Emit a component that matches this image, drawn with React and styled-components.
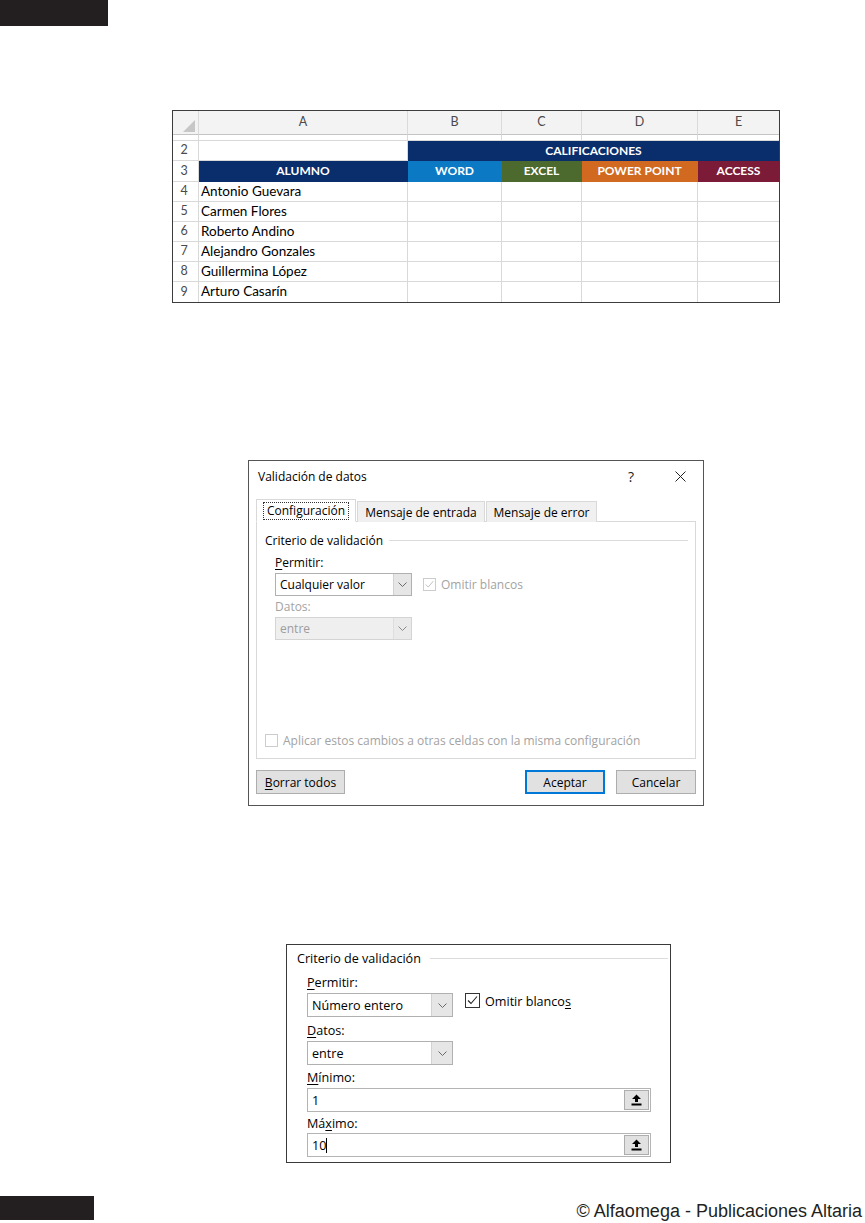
import React from "react";
import styled, { createGlobalStyle } from "styled-components";

const GlobalStyle = createGlobalStyle`
  *, *::before, *::after { box-sizing: border-box; }
  html, body { margin: 0; padding: 0; background: #ffffff; }
  body { font-family: "Open Sans", "Noto Sans", sans-serif; color: #000; }
`;

const Page = styled.div`
  width: 865px;
  height: 1223px;
  display: flex;
  flex-direction: column;
  overflow: hidden;
`;

const PageTab = styled.div`
  flex: none;
  width: ${(p) => p.$w}px;
  height: ${(p) => p.$h}px;
  background: #231f20;
`;

/* ---------------- Spreadsheet ---------------- */

const Sheet = styled.div`
  flex: none;
  margin: 84px 0 0 172px;
  width: 608px;
  border: 1px solid #3c3c3c;
  display: grid;
  grid-template-columns: 26px 209px 94px 80px 116px 81px;
  grid-template-rows: 24px 6px 20px 21px repeat(6, 20px);
  font-family: Lato, "Open Sans", sans-serif;
`;

const Cell = styled.div`
  display: flex;
  align-items: center;
  justify-content: ${(p) => (p.$center ? "center" : "flex-start")};
  padding: 0 2px;
  grid-column: ${(p) => (p.$span ? `span ${p.$span}` : "auto")};
  background: ${(p) => p.$bg || "#ffffff"};
  color: ${(p) => p.$fg || "#000000"};
  border-right: ${(p) => (p.$lastCol ? "none" : `1px solid ${p.$line || "#d9d9d9"}`)};
  border-bottom: ${(p) => (p.$lastRow ? "none" : `1px solid ${p.$line || "#d9d9d9"}`)};
  font-size: ${(p) => p.$fs || 13.5}px;
  font-weight: ${(p) => (p.$bold ? 700 : 400)};
  white-space: nowrap;
  overflow: hidden;
  line-height: 1;
`;

const ColHead = styled(Cell)`
  background: #f3f3f3;
  color: #4a4a4a;
  font-size: 12.5px;
  border-bottom: 1px solid #c4c4c4;
  border-right: ${(p) => (p.$lastCol ? "none" : "1px solid #dadada")};
  justify-content: center;
`;

const RowHead = styled(Cell)`
  color: #4a4a4a;
  font-size: 12.5px;
  justify-content: center;
  padding: 0 3px 0 0;
`;

const CornerCell = styled(ColHead)`
  align-items: flex-end;
  justify-content: flex-end;
  padding: 0 3px 2px 0;
`;

/* ---------------- Dialog ---------------- */

const Dialog = styled.section`
  flex: none;
  margin: 157px 0 0 248px;
  width: 456px;
  height: 346px;
  border: 1px solid #555555;
  background: #ffffff;
  display: flex;
  flex-direction: column;
  font-size: 12px;
`;

const TitleBar = styled.header`
  height: 31px;
  display: flex;
  align-items: center;
  padding-left: 9px;
`;

const Title = styled.div`
  flex: 1;
  font-size: 12px;
  color: #000;
`;

const TitleButton = styled.div`
  width: ${(p) => p.$w}px;
  height: 31px;
  margin-left: ${(p) => p.$ml || 0}px;
  display: flex;
  align-items: center;
  justify-content: center;
  color: #222;
  font-size: 14px;
`;

const TabStrip = styled.div`
  margin: 7px 0 -1px 0;
  height: 23px;
  padding-left: 7px;
  display: flex;
  align-items: flex-end;
`;

const Tab = styled.div`
  position: relative;
  z-index: ${(p) => (p.$active ? 1 : 0)};
  width: ${(p) => p.$w}px;
  height: ${(p) => (p.$active ? 23 : 21)}px;
  margin-left: ${(p) => (p.$active ? 0 : 1)}px;
  background: ${(p) => (p.$active ? "#ffffff" : "#f0f0f0")};
  border: 1px solid #d9d9d9;
  border-bottom: ${(p) => (p.$active ? "1px solid #ffffff" : "none")};
  display: flex;
  align-items: center;
  justify-content: center;
  font-size: 12px;
  color: #000;
  white-space: nowrap;
`;

const FocusRing = styled.span`
  border: 1px dotted #333;
  padding: 0 3px;
  line-height: 16px;
`;

const TabPanel = styled.div`
  margin: 0 7px;
  height: 238px;
  border: 1px solid #d9d9d9;
  background: #fff;
  padding: 10px 7px 9px 8px;
  display: flex;
  flex-direction: column;
`;

const Legend = styled.div`
  display: flex;
  align-items: center;
  height: ${(p) => p.$h}px;
  font-size: ${(p) => p.$fs}px;
  color: #000;
  white-space: nowrap;
`;

const LegendRule = styled.div`
  flex: 1;
  height: 1px;
  background: #dcdcdc;
  margin-left: ${(p) => p.$gap}px;
`;

const GroupBody = styled.div`
  padding-left: 10px;
  display: flex;
  flex-direction: column;
`;

const FieldLabel = styled.div`
  margin-top: ${(p) => p.$mt}px;
  height: ${(p) => p.$h}px;
  line-height: ${(p) => p.$h}px;
  font-size: ${(p) => p.$fs}px;
  color: ${(p) => (p.$muted ? "#a3a3a3" : "#000")};
  white-space: nowrap;
`;

const Key = styled.span`
  text-decoration: underline;
  text-underline-offset: 2px;
`;

const FieldRow = styled.div`
  margin-top: ${(p) => p.$mt}px;
  display: flex;
  align-items: ${(p) => p.$align || "center"};
`;

const Combo = styled.div`
  width: ${(p) => p.$w}px;
  height: ${(p) => p.$h}px;
  border: 1px solid ${(p) => (p.$disabled ? "#d4d4d4" : "#b0b0b0")};
  background: ${(p) => (p.$disabled ? "#efefef" : "#ffffff")};
  display: flex;
  align-items: stretch;
  font-size: ${(p) => p.$fs}px;
  color: ${(p) => (p.$disabled ? "#9d9d9d" : "#000")};
`;

const ComboText = styled.div`
  flex: 1;
  display: flex;
  align-items: center;
  padding-left: 4px;
  white-space: nowrap;
`;

const ComboArrow = styled.div`
  width: ${(p) => p.$w}px;
  background: ${(p) => (p.$disabled ? "#eaeaea" : "#e6e6e6")};
  border-left: 1px solid ${(p) => (p.$disabled ? "#dedede" : "#d2d2d2")};
  display: flex;
  align-items: center;
  justify-content: center;
`;

const Box = styled.div`
  flex: none;
  width: ${(p) => p.$size}px;
  height: ${(p) => p.$size}px;
  margin-left: ${(p) => p.$ml || 0}px;
  border: 1px solid ${(p) => (p.$disabled ? "#cccccc" : "#333333")};
  background: #fff;
  display: flex;
  align-items: center;
  justify-content: center;
`;

const BoxLabel = styled.span`
  margin-left: 5px;
  font-size: ${(p) => p.$fs}px;
  color: ${(p) => (p.$muted ? "#a3a3a3" : "#000")};
  white-space: nowrap;
`;

const Spacer = styled.div`
  flex: 1;
`;

const ButtonRow = styled.div`
  margin-top: 11px;
  padding: 0 7px;
  height: 24px;
  display: flex;
  gap: 11px;
`;

const Button = styled.div`
  width: ${(p) => p.$w}px;
  height: 24px;
  margin-right: ${(p) => (p.$pushRight ? "auto" : "0")};
  background: #e1e1e1;
  border: 1px solid ${(p) => (p.$default ? "#0078d7" : "#adadad")};
  box-shadow: ${(p) => (p.$default ? "inset 0 0 0 1px #0078d7" : "none")};
  display: flex;
  align-items: center;
  justify-content: center;
  font-size: 12px;
  color: #000;
`;

/* ---------------- Zoomed criteria panel ---------------- */

const Criteria = styled.section`
  flex: none;
  margin: 138px 0 0 286px;
  width: 385px;
  height: 219px;
  border: 1px solid #3a3a3a;
  background: #fff;
  padding: 5px 2px 0 10px;
`;

const RefInput = styled.div`
  margin-top: ${(p) => p.$mt}px;
  width: 344px;
  height: 24px;
  border: 1px solid #b4b4b4;
  display: flex;
  align-items: stretch;
  font-size: 12.6px;
`;

const RefValue = styled.div`
  flex: 1;
  display: flex;
  align-items: center;
  padding-left: 4px;
`;

const Caret = styled.span`
  display: inline-block;
  width: 1px;
  height: 15px;
  background: #000;
`;

const RefButton = styled.div`
  width: 25px;
  margin: 1px 1px 1px 0;
  background: #e1e1e1;
  border: 1px solid #adadad;
  display: flex;
  align-items: center;
  justify-content: center;
`;

/* ---------------- Footer ---------------- */

const Footer = styled.footer`
  flex: none;
  margin-top: 33px;
  height: 24px;
  display: flex;
  justify-content: space-between;
  align-items: flex-start;
`;

const Credit = styled.div`
  padding: 3px 3px 0 0;
  font-family: "Liberation Sans", Arial, sans-serif;
  font-size: 18px;
  line-height: 24px;
  color: #231f20;
  white-space: nowrap;
`;

/* ---------------- Icons ---------------- */

const Chevron = ({ color = "#6b6b6b" }) => (
  <svg width="9" height="5" viewBox="0 0 9 5">
    <polyline points="0.5,0.5 4.5,4.5 8.5,0.5" fill="none" stroke={color} strokeWidth="1" />
  </svg>
);

const Check = ({ size, color }) => (
  <svg width={size} height={size} viewBox="0 0 13 13">
    <polyline points="2,6.5 5,9.5 11,2.5" fill="none" stroke={color} strokeWidth="1.1" />
  </svg>
);

const CloseIcon = () => (
  <svg width="11" height="11" viewBox="0 0 11 11">
    <path d="M0.5 0.5 L10.5 10.5 M10.5 0.5 L0.5 10.5" stroke="#222" strokeWidth="1" />
  </svg>
);

const UploadArrow = () => (
  <svg width="11" height="12" viewBox="0 0 11 12">
    <path d="M5.5 0.5 L10 5 H7 V8 H4 V5 H1 Z" fill="#000" />
    <rect x="0.5" y="9.5" width="10" height="2" fill="#000" />
  </svg>
);

const CornerMark = () => (
  <svg width="12" height="12" viewBox="0 0 12 12">
    <polygon points="12,0 12,12 0,12" fill="#c7c7c7" />
  </svg>
);

/* ---------------- Data ---------------- */

const COLUMNS = ["A", "B", "C", "D", "E"];
const NAMES = [
  "Antonio Guevara",
  "Carmen Flores",
  "Roberto Andino",
  "Alejandro Gonzales",
  "Guillermina López",
  "Arturo Casarín",
];
const SUBJECTS = [
  { label: "WORD", bg: "#0b79c4" },
  { label: "EXCEL", bg: "#4c6a2d" },
  { label: "POWER POINT", bg: "#d16a20" },
  { label: "ACCESS", bg: "#7b1b37" },
];
const NAVY = "#0a2d6c";

function Spreadsheet() {
  return (
    <Sheet>
      <CornerCell>
        <CornerMark />
      </CornerCell>
      {COLUMNS.map((c, i) => (
        <ColHead key={c} $lastCol={i === COLUMNS.length - 1}>
          {c}
        </ColHead>
      ))}

      <RowHead />
      {COLUMNS.map((c, i) => (
        <Cell key={`r1${c}`} $lastCol={i === COLUMNS.length - 1} />
      ))}

      <RowHead>2</RowHead>
      <Cell />
      <Cell $span={4} $lastCol $center $bold $bg={NAVY} $fg="#fff" $fs={12} $line={NAVY}>
        CALIFICACIONES
      </Cell>

      <RowHead>3</RowHead>
      <Cell $center $bold $bg={NAVY} $fg="#fff" $fs={12} $line={NAVY}>
        ALUMNO
      </Cell>
      {SUBJECTS.map((s, i) => (
        <Cell
          key={s.label}
          $center
          $bold
          $bg={s.bg}
          $fg="#fff"
          $fs={12}
          $line={s.bg}
          $lastCol={i === SUBJECTS.length - 1}
        >
          {s.label}
        </Cell>
      ))}

      {NAMES.map((name, r) => {
        const last = r === NAMES.length - 1;
        return (
          <React.Fragment key={name}>
            <RowHead $lastRow={last}>{r + 4}</RowHead>
            <Cell $lastRow={last}>{name}</Cell>
            {SUBJECTS.map((s, i) => (
              <Cell key={s.label} $lastRow={last} $lastCol={i === SUBJECTS.length - 1} />
            ))}
          </React.Fragment>
        );
      })}
    </Sheet>
  );
}

function ValidationDialog() {
  return (
    <Dialog>
      <TitleBar>
        <Title>Validación de datos</Title>
        <TitleButton $w={28}>?</TitleButton>
        <TitleButton $w={46} $ml={12}>
          <CloseIcon />
        </TitleButton>
      </TitleBar>

      <TabStrip>
        <Tab $active $w={100}>
          <FocusRing>Configuración</FocusRing>
        </Tab>
        <Tab $w={128}>Mensaje de entrada</Tab>
        <Tab $w={111}>Mensaje de error</Tab>
      </TabStrip>

      <TabPanel>
        <Legend $h={16} $fs={12}>
          Criterio de validación
          <LegendRule $gap={6} />
        </Legend>
        <GroupBody>
          <FieldLabel $mt={7} $h={16} $fs={12}>
            <Key>P</Key>ermitir:
          </FieldLabel>
          <FieldRow $mt={2}>
            <Combo $w={137} $h={23} $fs={12}>
              <ComboText>Cualquier valor</ComboText>
              <ComboArrow $w={18}>
                <Chevron />
              </ComboArrow>
            </Combo>
            <Box $size={13} $ml={11} $disabled>
              <Check size={11} color="#bdbdbd" />
            </Box>
            <BoxLabel $fs={12} $muted>
              Omitir blancos
            </BoxLabel>
          </FieldRow>
          <FieldLabel $mt={3} $h={16} $fs={12} $muted>
            Datos:
          </FieldLabel>
          <FieldRow $mt={2}>
            <Combo $w={137} $h={23} $fs={12} $disabled>
              <ComboText>entre</ComboText>
              <ComboArrow $w={18} $disabled>
                <Chevron color="#8a8a8a" />
              </ComboArrow>
            </Combo>
          </FieldRow>
        </GroupBody>
        <Spacer />
        <FieldRow $mt={0}>
          <Box $size={13} $disabled />
          <BoxLabel $fs={12} $muted>
            Aplicar estos cambios a otras celdas con la misma configuración
          </BoxLabel>
        </FieldRow>
      </TabPanel>

      <ButtonRow>
        <Button $w={89} $pushRight>
          <span>
            <Key>B</Key>orrar todos
          </span>
        </Button>
        <Button $w={80} $default>
          Aceptar
        </Button>
        <Button $w={80}>Cancelar</Button>
      </ButtonRow>
    </Dialog>
  );
}

function CriteriaPanel() {
  return (
    <Criteria>
      <Legend $h={17} $fs={12.6}>
        Criterio de validación
        <LegendRule $gap={9} />
      </Legend>
      <GroupBody>
        <FieldLabel $mt={7} $h={17} $fs={12.6}>
          <Key>P</Key>ermitir:
        </FieldLabel>
        <FieldRow $mt={2} $align="flex-start">
          <Combo $w={146} $h={24} $fs={12.6}>
            <ComboText>Número entero</ComboText>
            <ComboArrow $w={21}>
              <Chevron />
            </ComboArrow>
          </Combo>
          <Box $size={15} $ml={12}>
            <Check size={13} color="#222" />
          </Box>
          <BoxLabel $fs={12.6}>
            Omitir blanco<Key>s</Key>
          </BoxLabel>
        </FieldRow>
        <FieldLabel $mt={5} $h={17} $fs={12.6}>
          <Key>D</Key>atos:
        </FieldLabel>
        <FieldRow $mt={2}>
          <Combo $w={146} $h={24} $fs={12.6}>
            <ComboText>entre</ComboText>
            <ComboArrow $w={21}>
              <Chevron />
            </ComboArrow>
          </Combo>
        </FieldRow>
        <FieldLabel $mt={4} $h={17} $fs={12.6}>
          <Key>M</Key>ínimo:
        </FieldLabel>
        <RefInput $mt={2}>
          <RefValue>1</RefValue>
          <RefButton>
            <UploadArrow />
          </RefButton>
        </RefInput>
        <FieldLabel $mt={3} $h={17} $fs={12.6}>
          Má<Key>x</Key>imo:
        </FieldLabel>
        <RefInput $mt={1}>
          <RefValue>
            10
            <Caret />
          </RefValue>
          <RefButton>
            <UploadArrow />
          </RefButton>
        </RefInput>
      </GroupBody>
    </Criteria>
  );
}

export default function App() {
  return (
    <>
      <GlobalStyle />
      <Page>
        <PageTab $w={108} $h={26} />
        <Spreadsheet />
        <ValidationDialog />
        <CriteriaPanel />
        <Footer>
          <PageTab $w={94} $h={24} />
          <Credit>© Alfaomega - Publicaciones Altaria</Credit>
        </Footer>
      </Page>
    </>
  );
}
